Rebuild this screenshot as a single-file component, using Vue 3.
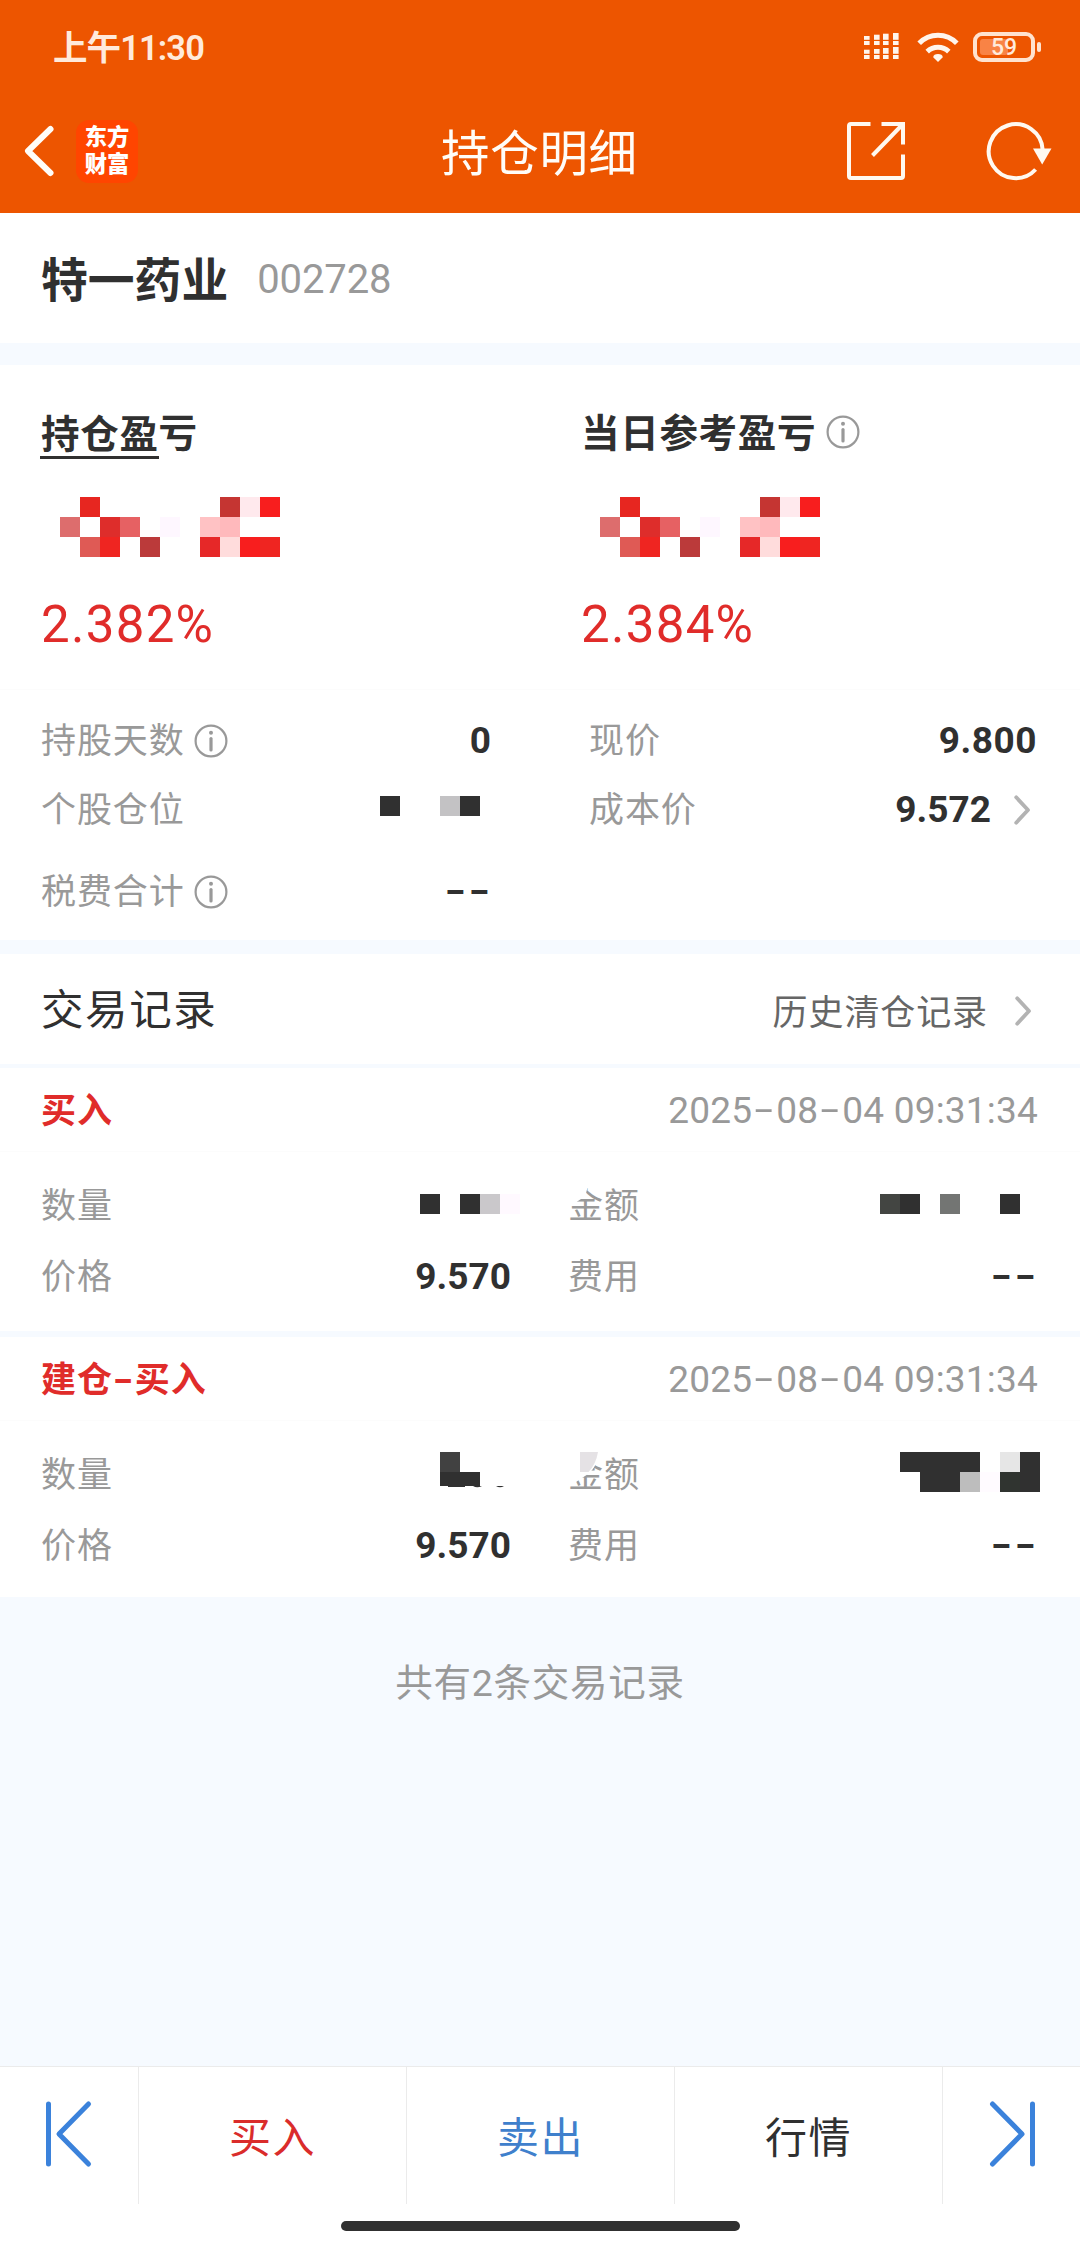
<script setup>
import { h } from 'vue'

const D = '#303030'

// Redacted value: a grid of 20px cells, each given as [column, row, colour]
const Mosaic = (props) =>
  h(
    'svg',
    { width: props.cols * 20, height: props.rows * 20, viewBox: `0 0 ${props.cols * 20} ${props.rows * 20}`, 'shape-rendering': 'crispEdges', style: 'display:block;flex:none' },
    props.cells.map(([x, y, fill]) => h('rect', { x: x * 20, y: y * 20, width: 20, height: 20, fill }))
  )
Mosaic.props = ['cols', 'rows', 'cells']

const InfoIcon = () =>
  h('svg', { width: 34, height: 34, viewBox: '0 0 34 34', fill: 'none', style: 'display:block;flex:none' }, [
    h('circle', { cx: 17, cy: 17, r: 15.4, stroke: '#999', 'stroke-width': 2.2 }),
    h('circle', { cx: 17, cy: 8.8, r: 2, fill: '#999' }),
    h('path', { d: 'M17 14.5V26', stroke: '#999', 'stroke-width': 3.2, 'stroke-linecap': 'round' })
  ])

const Chevron = () =>
  h('svg', { width: 18, height: 32, viewBox: '0 0 18 32', fill: 'none', style: 'display:block;flex:none' }, [
    h('path', { d: 'M3.2 3.3L15 16L3.2 28.7', stroke: '#b3b3b3', 'stroke-width': 3.8, 'stroke-linecap': 'round', 'stroke-linejoin': 'round' })
  ])

const profitCells = [
  [1, 0, '#e72620'], [8, 0, '#c53532'], [9, 0, '#ffe9ed'], [10, 0, '#f81e1e'],
  [0, 1, '#dd6d6d'], [2, 1, '#de2d2b'], [3, 1, '#e66163'], [5, 1, '#fef7ff'], [7, 1, '#ffc2c4'], [8, 1, '#ffb9bc'],
  [1, 2, '#df5a55'], [2, 2, '#ef2521'], [4, 2, '#bb3a3a'], [7, 2, '#e62828'], [8, 2, '#ffdcdc'], [9, 2, '#f81e1e'], [10, 2, '#ef2521']
]
const positionCells = [[0, 0, D], [3, 0, '#c3c2c4'], [4, 0, D]]

const records = [
  {
    type: ['买入'],
    qty: [[0, 0, D], [2, 0, D], [3, 0, '#cac8cb'], [4, 0, '#fff9ff']],
    amount: [[0, 0, '#434542'], [1, 0, D], [3, 0, '#737573'], [6, 0, D]]
  },
  {
    type: ['建仓', '买入'],
    amount: [
      [0, 0, D], [1, 0, D], [2, 0, D], [3, 0, D], [5, 0, '#e6e6e6'], [6, 0, D],
      [1, 1, D], [2, 1, D], [3, 1, '#bdbdbd'], [4, 1, '#fffbff'], [5, 1, '#303430'], [6, 1, D]
    ]
  }
]

const signalCols = [
  [0, 37, 50.7], [10, 35.7, 50], [19, 34.7, 49], [29, 34, 48]
]
</script>

<template>
  <div class="page">
    <header class="top">
      <div class="status">
        <span class="time">上午11:30</span>
        <div class="sys">
          <svg width="35" height="28" viewBox="0 34 35 28" fill="#fff5ec">
            <template v-for="c in signalCols" :key="c[0]">
              <rect :x="c[0]" :y="c[1]" width="5.6" :height="40.8 - c[1]" />
              <rect :x="c[0]" y="42" width="5.6" height="4" />
              <rect :x="c[0]" :y="c[2]" width="5.6" :height="54.8 - c[2]" />
              <rect :x="c[0]" y="56" width="5.6" height="4" />
            </template>
          </svg>
          <svg class="wifi" width="42" height="32" viewBox="0 0 42 32" fill="none" stroke="#fff5ec" stroke-width="5">
            <path d="M2.2 12.2A26 26 0 0 1 39.8 12.2" />
            <path d="M10.2 20.6A15.5 15.5 0 0 1 31.8 20.6" />
            <path d="M21 31L16.2 26.2Q16.6 23 21 23T25.8 26.2Z" fill="#fff5ec" stroke="none" />
          </svg>
          <div class="battery"><i></i><b>59</b></div>
          <div class="nub"></div>
        </div>
      </div>
      <nav class="nav">
        <svg class="back" width="36" height="54" viewBox="0 0 36 54" fill="none" stroke="#fffdf8" stroke-width="6" stroke-linecap="round" stroke-linejoin="round">
          <path d="M29.5 5L7 27L29.5 49" />
        </svg>
        <div class="logo"><span>东方</span><span>财富</span></div>
        <h1>持仓明细</h1>
        <svg class="share" width="60" height="60" viewBox="0 0 60 60" fill="none" stroke="#fff9f0" stroke-width="4">
          <path d="M24.5 3H5Q3 3 3 5V55Q3 57 5 57H55Q57 57 57 55V33.5" />
          <path d="M35.5 3H57V23.5M56 4L26.5 34.5" />
        </svg>
        <svg class="refresh" width="68" height="60" viewBox="0 0 68 60" fill="none">
          <path d="M57.7 29A27 27 0 1 0 50.6 48.5" stroke="#fff9f0" stroke-width="4" />
          <path d="M48 27.5H66.5L57.2 43.5Z" fill="#fff9f0" />
        </svg>
      </nav>
    </header>

    <section class="stock">
      <h2>特一药业</h2>
      <span>002728</span>
    </section>

    <section class="profit">
      <div class="half">
        <h3><u>持仓盈</u><span>亏</span></h3>
        <Mosaic class="pm" :cols="11" :rows="3" :cells="profitCells" />
        <p>2.382%</p>
      </div>
      <div class="half">
        <h3><span>当日参考盈亏</span><InfoIcon class="hi" /></h3>
        <Mosaic class="pm" :cols="11" :rows="3" :cells="profitCells" />
        <p>2.384%</p>
      </div>
    </section>

    <section class="stats">
      <div class="col left">
        <div class="row"><label>持股天数</label><InfoIcon class="li" /><b>0</b></div>
        <div class="row"><label>个股仓位</label><Mosaic class="posm" :cols="5" :rows="1" :cells="positionCells" /></div>
        <div class="row last"><label>税费合计</label><InfoIcon class="li" /><b class="dd"><i>-</i><i>-</i></b></div>
      </div>
      <div class="col right">
        <div class="row"><label>现价</label><b class="now">9.800</b></div>
        <div class="row"><label>成本价</label><b class="cost">9.572</b><Chevron class="chev" /></div>
      </div>
    </section>

    <section class="rechead">
      <h3>交易记录</h3>
      <span>历史清仓记录</span><Chevron class="chev" />
    </section>

    <section v-for="(r, i) in records" :key="i" class="record">
      <div class="rtop">
        <h4>{{ r.type[0] }}<template v-if="r.type[1]"><i>-</i>{{ r.type[1] }}</template></h4>
        <time>2025<i>-</i>08<i>-</i>04 09:31:34</time>
      </div>
      <div class="rgrid">
        <div class="row">
          <label>数量</label>
          <Mosaic v-if="i === 0" class="q0" :cols="5" :rows="1" :cells="r.qty" />
          <svg v-else class="q1" width="80" height="40" viewBox="0 0 80 40" :fill="D">
            <path d="M0 0H20V20H0Z" fill="#414141" />
            <path d="M0 20H40V34H0ZM8 34H25V35H8ZM33 34H42Q37 36.5 33 34ZM56 34H64Q60 36.5 56 34Z" />
          </svg>
        </div>
        <div class="row">
          <label class="amt">金额
            <svg v-if="i === 0" class="patch" width="24" height="22" viewBox="0 0 24 22"><path d="M0 0H20L18 7L13 13L7 17L0 19Z" fill="#fff" /></svg>
            <svg v-else class="patch p1" width="34" height="34" viewBox="0 0 34 34">
              <path d="M0 0H31L29 9Q25 20 17 24L8 30L0 31Z" fill="#fff" />
              <path d="M12 0H30Q28 12 20.5 20H12Z" fill="#e5e2e5" />
            </svg>
          </label>
          <Mosaic :class="'a' + i" :cols="7" :rows="i + 1" :cells="r.amount" />
        </div>
        <div class="row"><label>价格</label><b>9.570</b></div>
        <div class="row"><label>费用</label><b class="dd"><i>-</i><i>-</i></b></div>
      </div>
    </section>

    <p class="total">共有2条交易记录</p>

    <footer>
      <div class="tabs">
        <div class="end">
          <svg width="50" height="68" viewBox="0 0 50 68" fill="none" stroke="#3b82db" stroke-width="5" stroke-linecap="round" stroke-linejoin="round">
            <path d="M4.5 4V64M44.5 4L15 34L44.5 64" />
          </svg>
        </div>
        <div class="tab buy">买入</div>
        <div class="tab sell">卖出</div>
        <div class="tab">行情</div>
        <div class="end">
          <svg width="50" height="68" viewBox="0 0 50 68" fill="none" stroke="#3b82db" stroke-width="5" stroke-linecap="round" stroke-linejoin="round">
            <path d="M45.5 4V64M5.5 4L35 34L5.5 64" />
          </svg>
        </div>
      </div>
      <div class="homebar"></div>
    </footer>
  </div>
</template>

<style>
body {
  margin: 0;
  background: #f6faff;
}
</style>

<style scoped>
.page {
  width: 1080px;
  height: 2248px;
  display: flex;
  flex-direction: column;
  overflow: hidden;
  background: #f6faff;
  color: #303030;
  font-family: Roboto, "Noto Sans CJK SC", sans-serif;
}
h1, h2, h3, h4, p { margin: 0; }
i { font-style: normal; }
section { flex: none; background: #fff; box-sizing: border-box; }

.top { flex: none; height: 213px; background: #ed5500; }
.status {
  height: 94px;
  display: flex;
  justify-content: space-between;
  align-items: center;
  padding: 0 39px 0 53px;
}
.time { font-size: 34.5px; font-weight: 600; color: #ffeadb; line-height: 40px; letter-spacing: -0.9px; padding-top: 2px; }
.sys { display: flex; align-items: center; }
.sys svg { display: block; }
.sys .wifi { margin: 0 14px 0 18px; }
.battery {
  position: relative;
  box-sizing: border-box;
  width: 62px;
  height: 30px;
  border: 4px solid #ffe3cf;
  border-radius: 9px;
}
.battery i { position: absolute; left: 3px; top: 3px; width: 28px; height: 16px; border-radius: 3px; background: #f98345; }
.battery b { position: absolute; left: 0; right: 0; top: 0; text-align: center; font-size: 23px; font-weight: 500; line-height: 23px; color: #ffeadb; }
.nub { width: 4px; height: 10px; margin-left: 2px; border-radius: 2px; background: #ffe3cf; }

.nav { height: 114px; display: flex; align-items: center; }
.back { margin-left: 21px; }
.logo {
  width: 62px;
  height: 63px;
  margin-left: 19px;
  border-radius: 13px;
  background: #ff4500;
  color: #fff;
  font-size: 22.3px;
  font-weight: 900;
  line-height: 27px;
  display: flex;
  flex-direction: column;
  align-items: center;
  justify-content: center;
}
.nav h1 { margin-left: 303px; width: 204px; font-size: 48.5px; font-weight: 400; line-height: 60px; color: #fffdf8; letter-spacing: 0.7px; padding-top: 7px; white-space: nowrap; }
.share { margin-left: 201px; }
.refresh { margin-left: 79px; }

.stock { height: 130px; display: flex; align-items: center; padding-left: 41px; margin-bottom: 22px; }
.stock h2 { font-size: 46.8px; font-weight: 700; line-height: 60px; padding-top: 5px; }
.stock span { margin-left: 29px; font-size: 40px; line-height: 48px; color: #999; letter-spacing: -0.1px; padding-top: 4px; }

.profit { height: 325px; display: flex; padding-top: 42px; border-bottom: 1px solid #fcfcfc; }
.half { width: 540px; padding-left: 41px; box-sizing: border-box; }
.half h3 { display: flex; align-items: center; font-size: 38.5px; font-weight: 700; height: 50px; line-height: 50px; letter-spacing: 0.7px; }
.half h3 span { position: relative; top: 2px; }
.half h3 u { text-decoration: none; box-shadow: 0 3px 0 0 #303030; height: 46px; line-height: 50px; margin-left: -1px; padding-left: 1px; padding-top: 2px; }
.hi { margin-left: 10px; }
.pm { margin: 40px 0 0 19px; }
.half p { margin-top: 38px; font-size: 51px; line-height: 60px; color: #e02c2a; letter-spacing: 1.3px; }

.stats { height: 250px; display: flex; padding-top: 16px; margin-bottom: 14px; }
.stats .left { width: 450px; padding-left: 41px; }
.stats .right { width: 448px; padding-left: 98px; }
.row { display: flex; align-items: center; height: 70px; }
.stats .row { height: 69px; }
.stats .last { margin-top: 13px; }
label { font-size: 35px; letter-spacing: 0.9px; color: #999; line-height: 48px; position: relative; padding-top: 2px; }
.row b { margin-left: auto; font-size: 37px; font-weight: 700; line-height: 48px; padding-top: 1px; }
.row .now { letter-spacing: 0.5px; }
.row .cost { margin-right: 22px; }
.chev { margin-right: 6px; }
.li { margin-left: 9px; }
.posm { margin-left: auto; margin-right: 11px; margin-top: -7px; }
.dd { display: flex; }
.dd i { width: 23.3px; text-align: center; transform: translateY(-1px) scaleX(1.55); display: block; }

.rechead { height: 110px; display: flex; align-items: center; padding: 3px 42px 0 41px; margin-bottom: 4px; }
.rechead h3 { font-size: 42.5px; font-weight: 400; line-height: 56px; letter-spacing: 1.6px; margin-right: auto; }
.rechead span { font-size: 35px; letter-spacing: 0.9px; color: #666; line-height: 48px; margin-right: 26px; padding-top: 6px; }

.record { height: 263px; margin-bottom: 6px; }
.record:last-of-type { height: 260px; margin-bottom: 0; }
.rtop { height: 83px; display: flex; align-items: center; justify-content: space-between; padding: 0 42px 0 41px; border-bottom: 1px solid #fcfcfc; }
.rtop h4 { font-size: 35px; font-weight: 700; letter-spacing: 0.9px; line-height: 48px; color: #e02c2a; padding-top: 5px; }
.rtop h4 i { display: inline-block; width: 22px; text-align: center; transform: scaleX(1.6); }
time { font-size: 37px; line-height: 48px; color: #999; letter-spacing: 0.2px; padding-top: 3px; }
time i { display: inline-block; width: 24px; text-align: center; transform: translateY(-1px) scaleX(1.8); }
.rgrid { display: grid; grid-template-columns: 470px 469px; column-gap: 57px; padding: 18px 0 0 41px; }
.rgrid .row { height: 71px; }
.q0 { margin-left: auto; margin-right: -9px; margin-top: -4px; }
.q1 { margin-left: auto; margin-right: -9px; margin-top: -6px; }
.a0 { margin-left: auto; margin-right: 17px; margin-top: -4px; }
.a1 { margin-left: auto; margin-right: -3px; margin-top: -6px; }
.patch { position: absolute; left: 0; top: 5px; }
.p1 { left: 0; top: 2px; }

.total { margin-top: 60px; text-align: center; font-size: 37.5px; letter-spacing: 0.75px; line-height: 53px; color: #999; }

footer { margin-top: auto; height: 182px; flex: none; box-sizing: border-box; background: #fff; border-top: 1px solid #ebebeb; }
.tabs { display: flex; height: 137px; }
.end { flex: none; width: 138px; box-sizing: border-box; display: flex; align-items: center; justify-content: center; padding-bottom: 4px; }
.tab { flex: 1; border-left: 1px solid #ebebeb; text-align: center; font-size: 42px; letter-spacing: 1.6px; line-height: 144px; }
.tab + .end { border-left: 1px solid #ebebeb; }
.buy { color: #da2c2b; }
.sell { color: #3f80cc; }
.homebar { width: 399px; height: 10px; margin: 17px auto 0; border-radius: 5px; background: #303030; }
</style>
